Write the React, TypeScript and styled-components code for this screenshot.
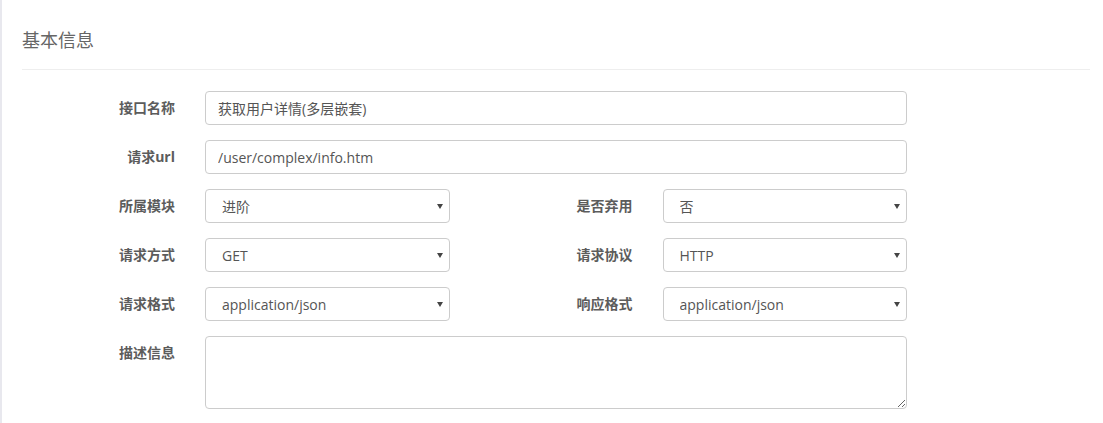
import React from "react";
import styled, { createGlobalStyle } from "styled-components";

const GlobalStyle = createGlobalStyle`
  html, body {
    margin: 0;
    padding: 0;
    background: #fff;
  }
  body {
    font-family: "Open Sans", "Noto Sans CJK SC", sans-serif;
    font-size: 14px;
    color: #555;
  }
  * { box-sizing: border-box; }
`;

const Panel = styled.div`
  height: 423px;
  border-left: 2px solid #e8e8ee;
  padding: 0 13px 0 20px;
`;

const Header = styled.h3`
  margin: 0;
  padding: 28px 0 17px;
  font-size: 18px;
  line-height: 24px;
  font-weight: normal;
  color: #666;
  border-bottom: 1px solid #eee;
`;

const Form = styled.form`
  margin-top: 21px;
  display: grid;
  grid-template-columns: 153px 244.5px 153px 244.5px;
  column-gap: 30px;
  row-gap: 15px;
`;

const Label = styled.label`
  padding-top: 7px;
  line-height: 20px;
  text-align: right;
  font-weight: bold;
  color: #5c5c5c;
  font-size: 14px;
`;

const Input = styled.input<{ $wide?: boolean }>`
  grid-column: ${(p) => (p.$wide ? "span 3" : "span 1")};
  height: 34px;
  padding: 6px 12px;
  border: 1px solid #ccc;
  border-radius: 4px;
  font: inherit;
  color: #555;
  outline: none;
`;

const TextArea = styled.textarea`
  grid-column: span 3;
  height: 73px;
  padding: 6px 12px;
  border: 1px solid #ccc;
  border-radius: 4px;
  font: inherit;
  color: #555;
  outline: none;
  resize: vertical;
`;

const SelectWrap = styled.div`
  position: relative;
  height: 34px;

  &::after {
    content: "";
    position: absolute;
    right: 7px;
    top: 15px;
    border-left: 3px solid transparent;
    border-right: 3px solid transparent;
    border-top: 5px solid #444;
    pointer-events: none;
  }
`;

const Select = styled.select`
  width: 100%;
  height: 34px;
  padding: 6px 12px 6px 16px;
  border: 1px solid #ccc;
  border-radius: 4px;
  background: #fff;
  font: inherit;
  color: #555;
  appearance: none;
  outline: none;
`;

const Dropdown = ({ value }: { value: string }) => (
  <SelectWrap>
    <Select defaultValue={value}>
      <option>{value}</option>
    </Select>
  </SelectWrap>
);

const App = () => (
  <>
    <GlobalStyle />
    <Panel>
      <Header>基本信息</Header>
      <Form>
        <Label>接口名称</Label>
        <Input $wide defaultValue="获取用户详情(多层嵌套)" />

        <Label>请求url</Label>
        <Input $wide defaultValue="/user/complex/info.htm" />

        <Label>所属模块</Label>
        <Dropdown value="进阶" />
        <Label>是否弃用</Label>
        <Dropdown value="否" />

        <Label>请求方式</Label>
        <Dropdown value="GET" />
        <Label>请求协议</Label>
        <Dropdown value="HTTP" />

        <Label>请求格式</Label>
        <Dropdown value="application/json" />
        <Label>响应格式</Label>
        <Dropdown value="application/json" />

        <Label>描述信息</Label>
        <TextArea />
      </Form>
    </Panel>
  </>
);

export default App;
